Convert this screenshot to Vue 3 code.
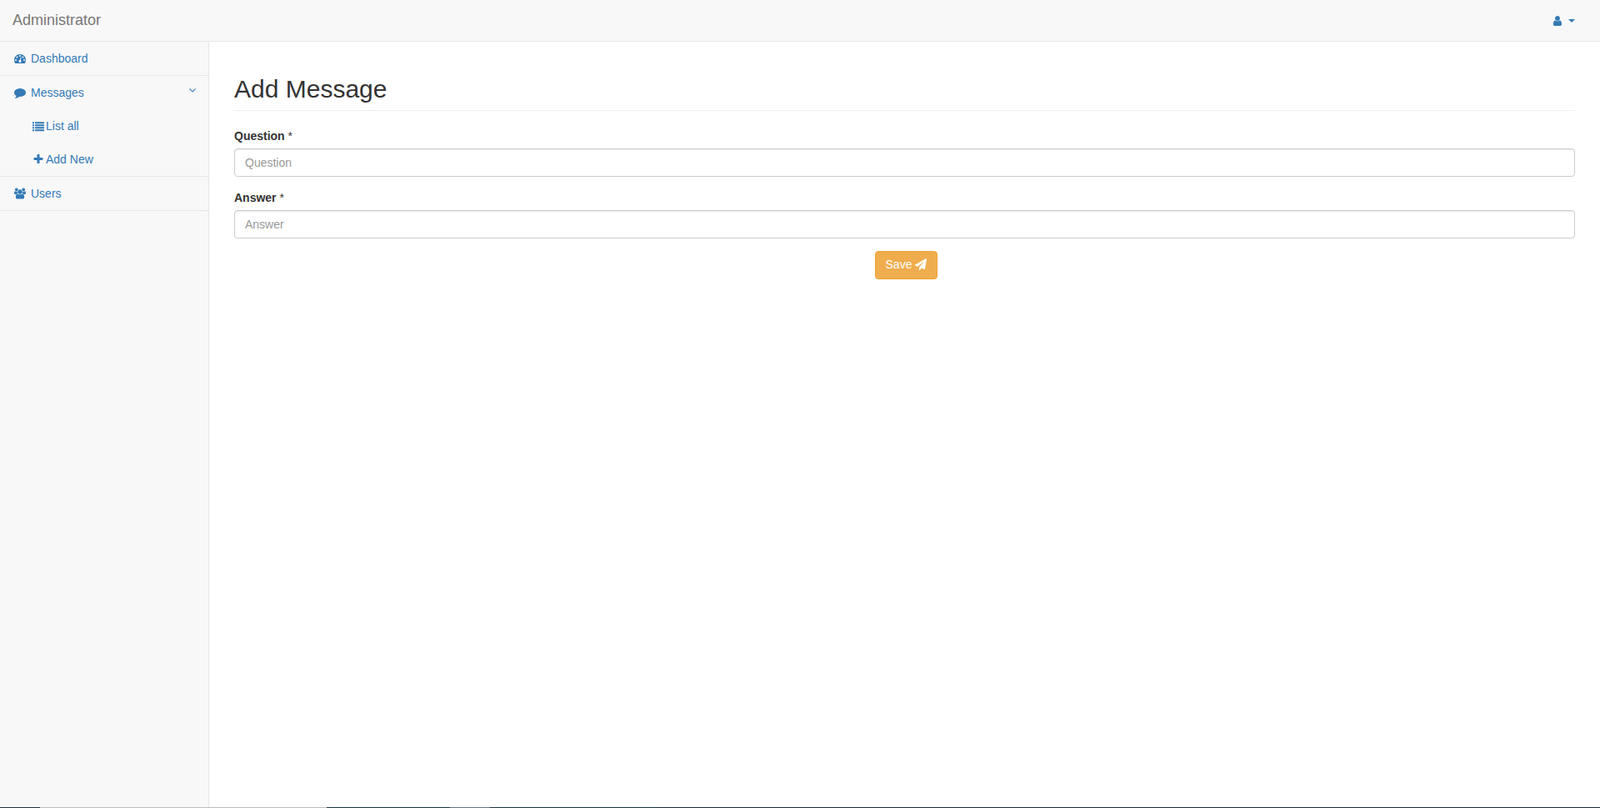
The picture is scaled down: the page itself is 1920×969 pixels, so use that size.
<script setup>
const icons = {
  dashboard: { box: '0 0 1792 1792', d: 'M384 1152q0-53-37.5-90.5t-90.5-37.5-90.5 37.5-37.5 90.5 37.5 90.5 90.5 37.5 90.5-37.5 37.5-90.5zm192-448q0-53-37.5-90.5t-90.5-37.5-90.5 37.5-37.5 90.5 37.5 90.5 90.5 37.5 90.5-37.5 37.5-90.5zm428 481l101-382q6-26-7.5-48.5t-38.5-29.5-48 6.5-30 39.5l-101 382q-60 5-107 43.5t-63 98.5q-20 77 20 146t117 89 146-20 89-117q16-60-6-117t-72-91zm660-33q0-53-37.5-90.5t-90.5-37.5-90.5 37.5-37.5 90.5 37.5 90.5 90.5 37.5 90.5-37.5 37.5-90.5zm-640-640q0-53-37.5-90.5t-90.5-37.5-90.5 37.5-37.5 90.5 37.5 90.5 90.5 37.5 90.5-37.5 37.5-90.5zm448 192q0-53-37.5-90.5t-90.5-37.5-90.5 37.5-37.5 90.5 37.5 90.5 90.5 37.5 90.5-37.5 37.5-90.5zm320 448q0 261-141 483-19 29-54 29h-1402q-35 0-54-29-141-221-141-483 0-182 71-348t191-286 286-191 348-71 348 71 286 191 191 286 71 348z' },
  comment: { box: '0 0 1792 1792', d: 'M1792 896q0 174-120 321.5t-326 233-450 85.5q-70 0-145-8-198 175-460 242-49 14-114 22-17 2-30.5-9t-17.5-29v-1q-3-4-.5-12t2-10 4.5-9.5l6-9 7-8.5 8-9q7-8 31-34.5t34.5-38 31-39.5 32.5-51 27-59 26-76q-157-89-247.5-220t-90.5-281q0-130 71-248.5t191-204.5 286-136.5 348-50.5q244 0 450 85.5t326 233 120 321.5z' },
  list: { box: '0 0 1792 1792', d: 'M0 288h256v256h-256zM384 288h1408v256h-1408zM0 672h256v256h-256zM384 672h1408v256h-1408zM0 1056h256v256h-256zM384 1056h1408v256h-1408zM0 1440h256v256h-256zM384 1440h1408v256h-1408z' },
  plus: { box: '0 0 1792 1792', d: 'M1600 736v192q0 40-28 68t-68 28h-416v416q0 40-28 68t-68 28h-192q-40 0-68-28t-28-68v-416h-416q-40 0-68-28t-28-68v-192q0-40 28-68t68-28h416v-416q0-40 28-68t68-28h192q40 0 68 28t28 68v416h416q40 0 68 28t28 68z' },
  users: { box: '0 0 1920 1792', d: 'M593 896q-162 5-265 128h-134q-82 0-138-40.5t-56-118.5q0-353 124-353 6 0 43.5 21t97.5 42.5 119 21.5q67 0 133-23-5 37-5 66 0 139 81 256zm1071 637q0 120-73 189.5t-194 69.5h-874q-121 0-194-69.5t-73-189.5q0-53 3.5-103.5t14-109 26.5-108.5 43-97.5 62-81 85.5-53.5 111.5-20q10 0 43 21.5t73 48 107 48 135 21.5 135-21.5 107-48 73-48 43-21.5q61 0 111.5 20t85.5 53.5 62 81 43 97.5 26.5 108.5 14 109 3.5 103.5zm-1024-1277q0 106-75 181t-181 75-181-75-75-181 75-181 181-75 181 75 75 181zm704 384q0 159-112.5 271.5t-271.5 112.5-271.5-112.5-112.5-271.5 112.5-271.5 271.5-112.5 271.5 112.5 112.5 271.5zm576 225q0 78-56 118.5t-138 40.5h-134q-103-123-265-128 81-117 81-256 0-29-5-66 66 23 133 23 59 0 119-21.5t97.5-42.5 43.5-21q124 0 124 353zm-128-609q0 106-75 181t-181 75-181-75-75-181 75-181 181-75 181 75 75 181z' },
  user: { box: '0 0 1792 1792', d: 'M1536 1399q0 109-62.5 187t-150.5 78h-854q-88 0-150.5-78t-62.5-187q0-85 8.5-160.5t31.5-152 58.5-131 94-89 134.5-34.5q131 128 313 128t313-128q76 0 134.5 34.5t94 89 58.5 131 31.5 152 8.5 160.5zm-256-887q0 159-112.5 271.5t-271.5 112.5-271.5-112.5-112.5-271.5 112.5-271.5 271.5-112.5 271.5 112.5 112.5 271.5z' },
  plane: { box: '0 0 1792 1792', d: 'M1764 11q33 24 27 64l-256 1536q-5 29-32 45-14 8-31 8-11 0-24-5l-453-185-242 295q-18 23-49 23-13 0-22-4-19-7-30.5-23.5t-11.5-36.5v-349l864-1059-1069 925-395-162q-37-14-40-55-2-40 32-59l1664-960q15-9 32-9 20 0 36 11z' },
  angle: { box: '0 0 1792 1792', d: 'M1395 736q0 13-10 23l-466 466q-10 10-23 10t-23-10l-466-466q-10-10-10-23t10-23l50-50q10-10 23-10t23 10l393 393 393-393q10-10 23-10t23 10l50 50q10 10 10 23z' },
}
</script>

<template>
  <div class="page">
    <header class="navbar">
      <a class="brand">Administrator</a>
      <a class="user-menu">
        <svg class="ic-user" :viewBox="icons.user.box"><path :d="icons.user.d" /></svg>
        <span class="caret"></span>
      </a>
    </header>
    <div class="body">
      <nav class="sidebar">
        <a class="item"><span class="fw"><svg class="ic" :viewBox="icons.dashboard.box"><path :d="icons.dashboard.d" /></svg></span><span class="lbl">Dashboard</span></a>
        <div class="group">
          <a class="row">
            <span class="fw"><svg class="ic" :viewBox="icons.comment.box"><path :d="icons.comment.d" /></svg></span><span class="lbl">Messages</span>
            <svg class="arrow" :viewBox="icons.angle.box"><path :d="icons.angle.d" /></svg>
          </a>
          <a class="sub"><span class="fw"><svg class="ic" :viewBox="icons.list.box"><path :d="icons.list.d" /></svg></span>List all</a>
          <a class="sub"><span class="fw"><svg class="ic" :viewBox="icons.plus.box"><path :d="icons.plus.d" /></svg></span>Add New</a>
        </div>
        <a class="item"><span class="fw"><svg class="ic" :viewBox="icons.users.box"><path :d="icons.users.d" /></svg></span><span class="lbl">Users</span></a>
      </nav>
      <main class="content">
        <h1 class="title">Add Message</h1>
        <form class="form">
          <div class="field">
            <label class="label">Question <span class="star">*</span></label>
            <input class="input" placeholder="Question" />
          </div>
          <div class="field">
            <label class="label">Answer <span class="star">*</span></label>
            <input class="input" placeholder="Answer" />
          </div>
          <div class="actions">
            <button type="button" class="btn">Save <svg class="ic-plane" :viewBox="icons.plane.box"><path :d="icons.plane.d" /></svg></button>
          </div>
        </form>
      </main>
    </div>
    <div class="strip">
      <span class="seg teal s48"></span>
      <span class="seg gray s344"></span>
      <span class="seg teal s148"></span>
      <span class="seg mid s48"></span>
      <span class="seg teal s200"></span>
      <span class="seg dark rest"></span>
    </div>
  </div>
</template>

<style>
html, body { margin: 0; background: #fff; }
</style>

<style scoped>
.page {
  height: 969px;
  display: flex;
  flex-direction: column;
  font-family: "Liberation Sans", Arial, sans-serif;
  font-size: 14px;
  line-height: 20px;
  color: #333;
  overflow: hidden;
}
a { color: #337ab7; text-decoration: none; }
svg { fill: currentColor; display: block; }

.navbar {
  box-sizing: border-box;
  height: 50px;
  flex: none;
  background: #f8f8f8;
  border-bottom: 1px solid #e7e7e7;
  display: flex;
  justify-content: space-between;
  align-items: center;
}
.brand {
  color: #777;
  font-size: 18px;
  padding-left: 15px;
  padding-bottom: 2px;
}
.user-menu {
  display: flex;
  align-items: center;
  gap: 6px;
  padding-right: 30px;
}
.ic-user { width: 14px; height: 14px; }
.caret {
  width: 0;
  height: 0;
  border-top: 4px solid #337ab7;
  border-left: 4px solid transparent;
  border-right: 4px solid transparent;
}

.body { flex: 1; display: flex; min-height: 0; }
.sidebar {
  width: 250px;
  flex: none;
  background: #f8f8f8;
  border-right: 1px solid #e7e7e7;
}
.item, .row {
  display: flex;
  align-items: center;
  height: 20px;
  padding: 10px 15px;
}
.item { border-bottom: 1px solid #e7e7e7; }
.group { border-bottom: 1px solid #e7e7e7; }
.fw { width: 18px; flex: none; display: flex; justify-content: center; }
.ic { width: 14px; height: 14px; }
.lbl { margin-left: 4px; }
.arrow { width: 14px; height: 14px; margin-left: auto; margin-top: -6px; margin-right: -3px; }
.sub {
  display: flex;
  align-items: center;
  height: 20px;
  padding: 10px 15px 10px 37px;
}

.content { flex: 1; min-width: 0; padding: 0 30px; }
.title {
  margin: 40px 0 20px;
  padding-bottom: 9px;
  border-bottom: 1px solid #eee;
  font-size: 30px;
  font-weight: 500;
  line-height: 33px;
  color: #333;
}
.field { margin-bottom: 15px; }
.label {
  display: block;
  margin-bottom: 5px;
  font-weight: 700;
  font-size: 14px;
  line-height: 20px;
}
.star { font-weight: 400; }
.input {
  display: block;
  box-sizing: border-box;
  width: 100%;
  height: 34px;
  padding: 6px 12px;
  font: 14px/20px "Liberation Sans", Arial, sans-serif;
  color: #555;
  background: #fff;
  border: 1px solid #ccc;
  border-radius: 4px;
  box-shadow: inset 0 1px 1px rgba(0, 0, 0, .075);
  outline: none;
}
.input::placeholder { color: #999; opacity: 1; }
.actions { display: flex; justify-content: center; padding-left: 4px; }
.btn {
  display: inline-flex;
  align-items: center;
  gap: 4px;
  height: 34px;
  box-sizing: border-box;
  padding: 5px 12px 7px;
  font: 14px/20px "Liberation Sans", Arial, sans-serif;
  color: #fff;
  background: #f0ad4e;
  border: 1px solid #eea236;
  border-radius: 4px;
}
.ic-plane { width: 14px; height: 14px; }

.strip { height: 1px; flex: none; display: flex; }
.dark { background: #1d2a3a; }
.teal { background: #1c3439; }
.gray { background: #bdbdbd; }
.mid { background: #66757a; }
.s48 { width: 48px; }
.s344 { width: 344px; }
.s148 { width: 148px; }
.s200 { width: 200px; }
.rest { flex: 1; }
</style>
